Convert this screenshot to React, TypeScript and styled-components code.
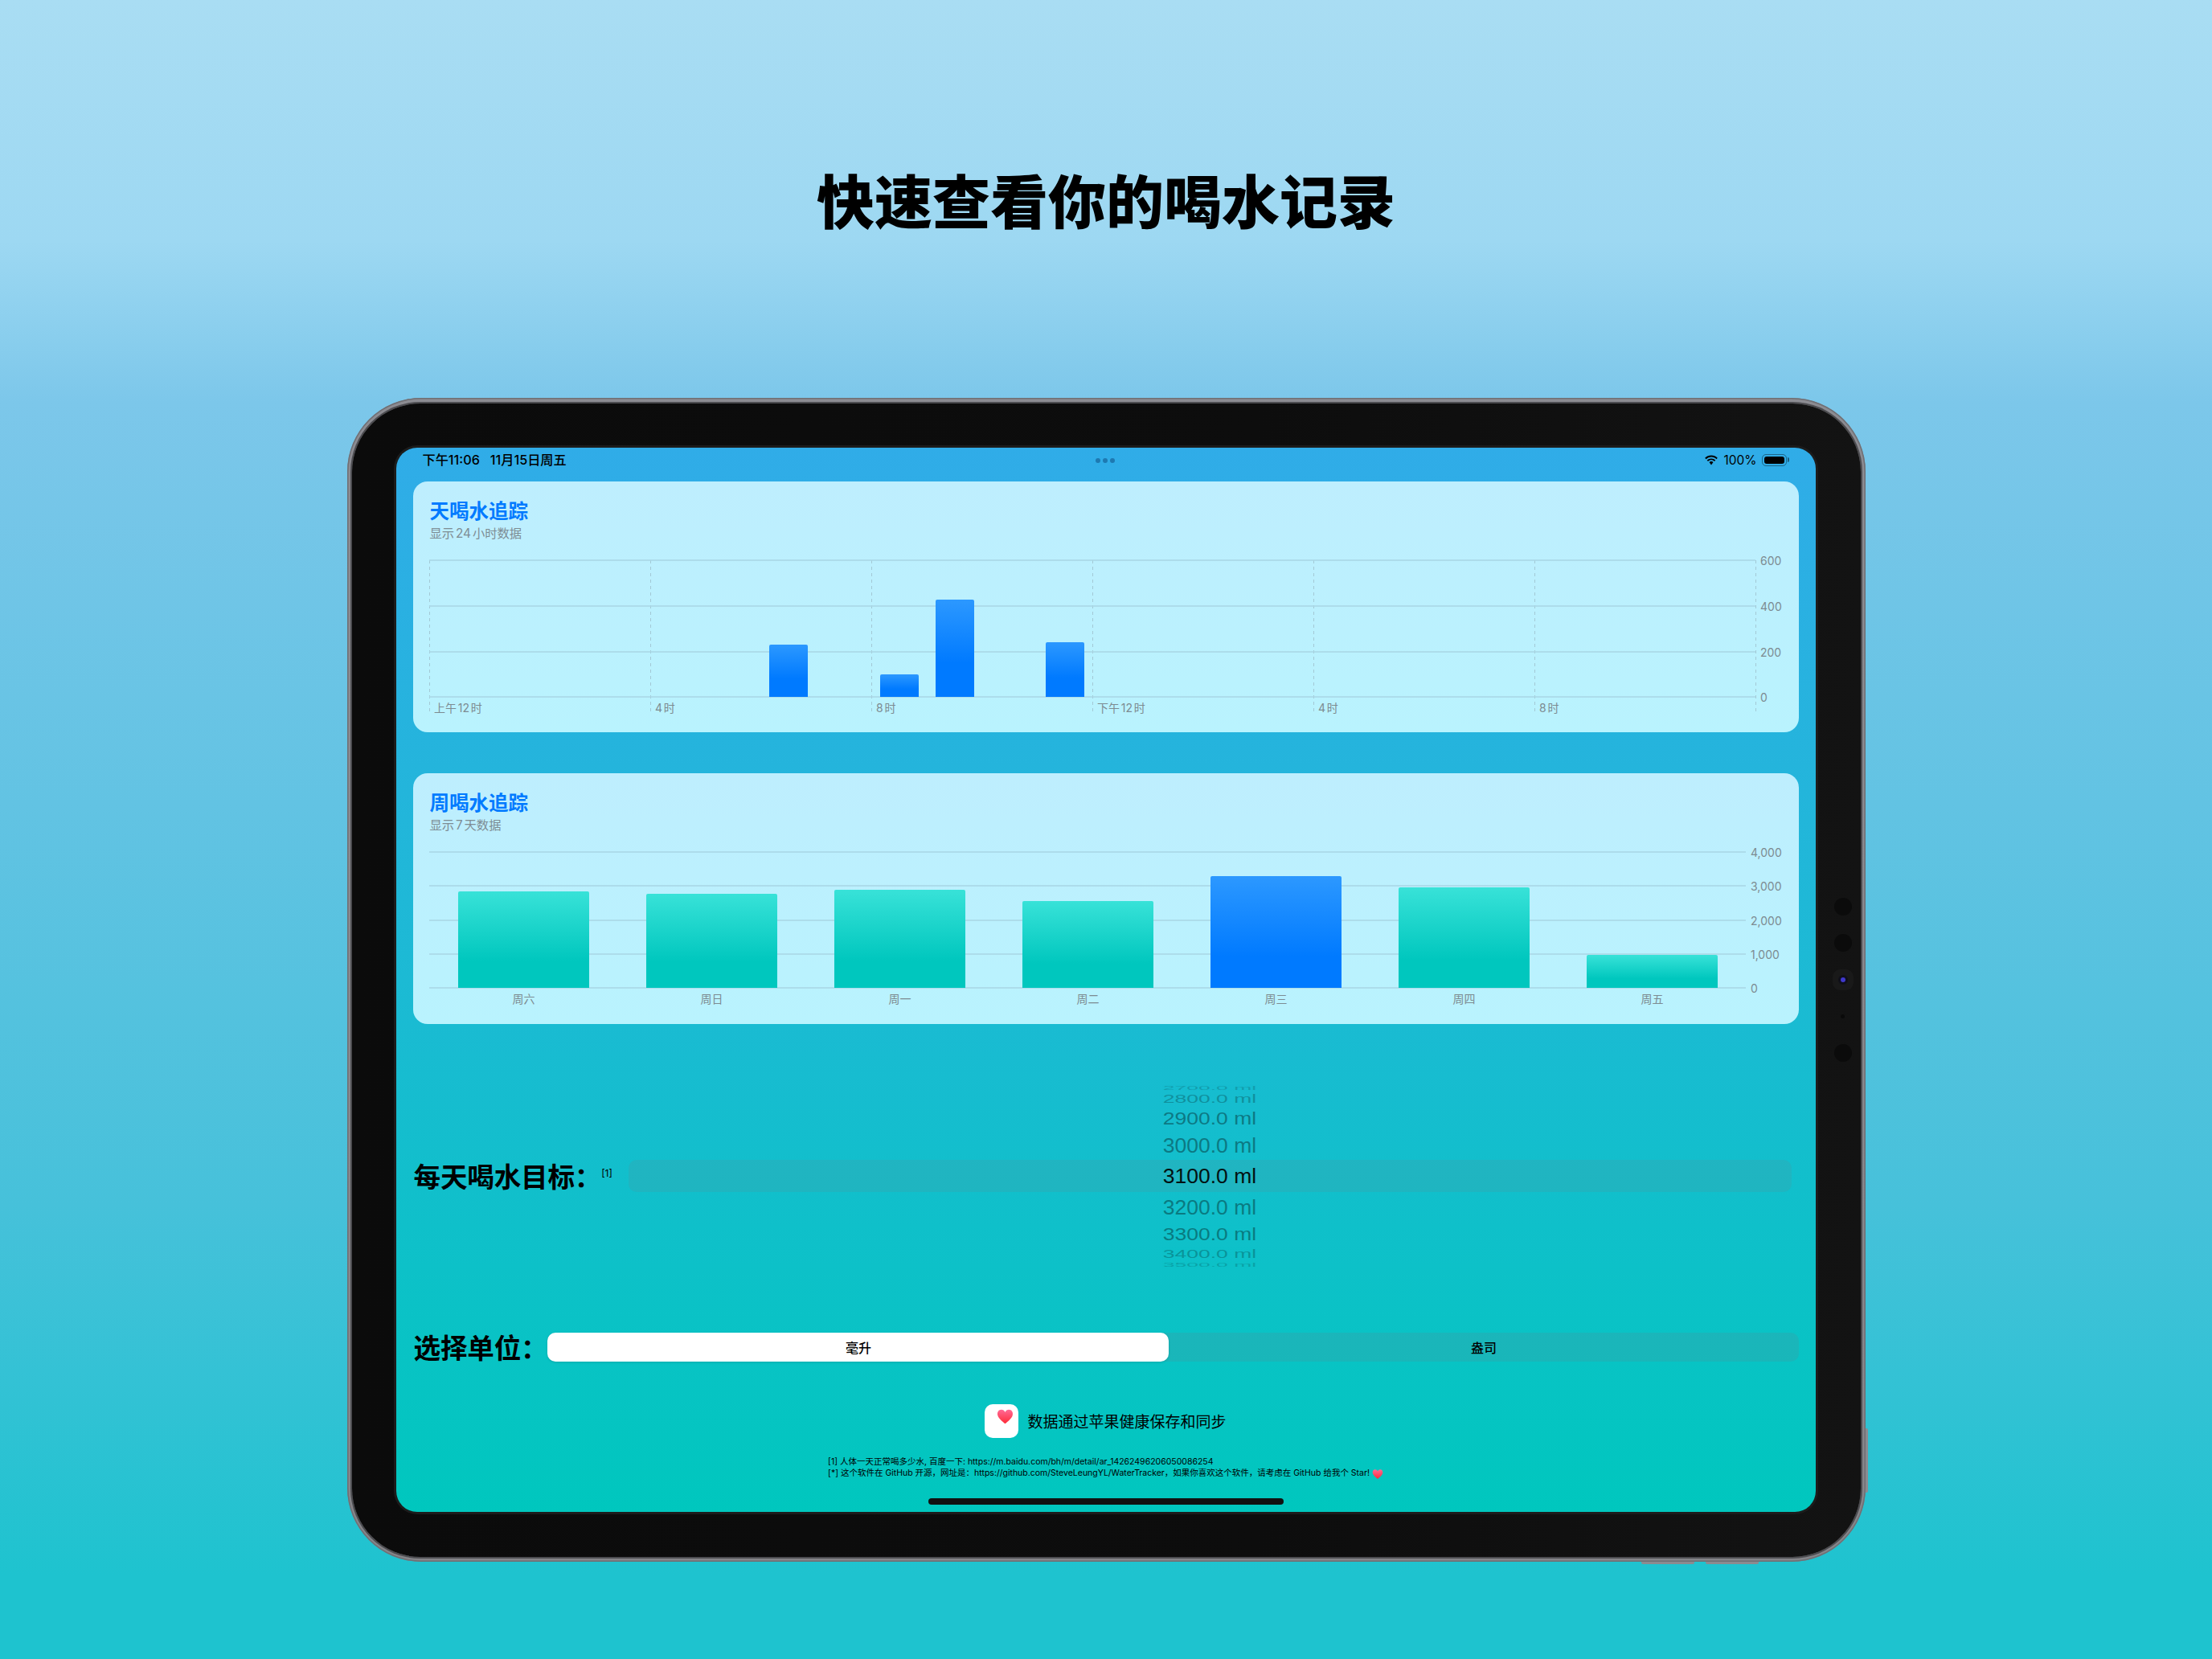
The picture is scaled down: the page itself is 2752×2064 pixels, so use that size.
import styled, { createGlobalStyle } from "styled-components";

const GlobalStyle = createGlobalStyle`
  html, body {
    margin: 0;
    padding: 0;
  }
  body {
    font-family: Inter, "Noto Sans CJK SC", sans-serif;
    text-autospace: normal;
  }
`;

const DAY_X_LABELS = ["上午12时", "4时", "8时", "下午12时", "4时", "8时"];
const DAY_Y_TICKS = [
  { y: 7, label: "600" },
  { y: 64, label: "400" },
  { y: 121, label: "200" },
  { y: 177, label: "0" },
];
const DAY_BARS = [
  { x: 422, top: 112 },
  { x: 560, top: 149 },
  { x: 629, top: 56 },
  { x: 766, top: 109 },
];

const WEEK_Y_TICKS = [
  { y: 7, label: "4,000" },
  { y: 49, label: "3,000" },
  { y: 92, label: "2,000" },
  { y: 134, label: "1,000" },
  { y: 176, label: "0" },
];
const WEEK_BARS = [
  { day: "周六", top: 56 },
  { day: "周日", top: 59 },
  { day: "周一", top: 54 },
  { day: "周二", top: 68 },
  { day: "周三", top: 37, today: true },
  { day: "周四", top: 51 },
  { day: "周五", top: 135 },
];

const PICKER_ROWS = [
  { label: "2700.0 ml", height: 8, squash: 0.3, fade: 0.16 },
  { label: "2800.0 ml", height: 20, squash: 0.56, fade: 0.24 },
  { label: "2900.0 ml", height: 30, squash: 0.8, fade: 0.36 },
  { label: "3000.0 ml", height: 36, squash: 0.96, fade: 0.36 },
  { label: "3100.0 ml", height: 40, squash: 1, fade: 0.9, selected: true },
  { label: "3200.0 ml", height: 38, squash: 0.96, fade: 0.36 },
  { label: "3300.0 ml", height: 30, squash: 0.8, fade: 0.36 },
  { label: "3400.0 ml", height: 18, squash: 0.56, fade: 0.24 },
  { label: "3500.0 ml", height: 8, squash: 0.3, fade: 0.16 },
];

function barPath(x: number, top: number, width: number, bottom: number) {
  return `M${x} ${bottom}V${top + 2}q0-2 2-2H${x + width - 2}q2 0 2 2V${bottom}Z`;
}

function DayChart() {
  return (
    <ChartSvg width="1682" height="200">
      <defs>
        <linearGradient id="dayBlue" x1="0" y1="0" x2="0" y2="1">
          <stop offset="0" stopColor="#2c98ff" />
          <stop offset="0.65" stopColor="#007aff" />
        </linearGradient>
      </defs>
      {[0, 1, 2, 3, 4, 5, 6].map((i) => (
        <line
          key={i}
          x1={i * 275 - 0.5}
          x2={i * 275 - 0.5}
          y1="7"
          y2="197"
          stroke="#a3c9d6"
          strokeDasharray="4 4"
        />
      ))}
      {DAY_Y_TICKS.map((tick) => (
        <g key={tick.label}>
          <line x1="-1" x2="1649" y1={tick.y} y2={tick.y} stroke="#a9d6e5" strokeWidth="1.5" />
          <AxisText x="1655" y={tick.y + 6}>
            {tick.label}
          </AxisText>
        </g>
      ))}
      {DAY_BARS.map((bar) => (
        <path key={bar.x} d={barPath(bar.x, bar.top, 48, 177)} fill="url(#dayBlue)" />
      ))}
      {DAY_X_LABELS.map((label, i) => (
        <AxisText key={i} x={i * 275 + 5} y="196">
          {label}
        </AxisText>
      ))}
    </ChartSvg>
  );
}

function WeekChart() {
  return (
    <ChartSvg width="1682" height="200">
      <defs>
        <linearGradient id="weekTeal" x1="0" y1="0" x2="0" y2="1">
          <stop offset="0" stopColor="#38e2d8" />
          <stop offset="0.72" stopColor="#00c7be" />
        </linearGradient>
        <linearGradient id="weekBlue" x1="0" y1="0" x2="0" y2="1">
          <stop offset="0" stopColor="#2c98ff" />
          <stop offset="0.72" stopColor="#007aff" />
        </linearGradient>
      </defs>
      {WEEK_Y_TICKS.map((tick) => (
        <g key={tick.label}>
          <line x1="-1" x2="1637" y1={tick.y} y2={tick.y} stroke="#a9d6e5" strokeWidth="1.5" />
          <AxisText x="1643" y={tick.y + 6}>
            {tick.label}
          </AxisText>
        </g>
      ))}
      {WEEK_BARS.map((bar, i) => (
        <g key={bar.day}>
          <path
            d={barPath(35 + i * 234, bar.top, 163, 176)}
            fill={bar.today ? "url(#weekBlue)" : "url(#weekTeal)"}
          />
          <AxisText x={116.5 + i * 234} y="195" textAnchor="middle">
            {bar.day}
          </AxisText>
        </g>
      ))}
    </ChartSvg>
  );
}

function Heart({ id, size }: { id: string; size: number }) {
  return (
    <svg width={size} height={size} viewBox="0 0 24 24">
      <defs>
        <linearGradient id={id} x1="0" y1="0" x2="0" y2="1">
          <stop offset="0" stopColor="#ff6a96" />
          <stop offset="1" stopColor="#ff2b38" />
        </linearGradient>
      </defs>
      <path
        d="M12 22S2.500 15.500 1.300 9.800C.4 5.300 3 2 6.600 2 9 2 11 3.400 12 5.600 13 3.400 15 2 17.400 2c3.600 0 6.200 3.300 5.300 7.800C21.500 15.500 12 22 12 22z"
        fill={`url(#${id})`}
      />
    </svg>
  );
}

function WifiIcon() {
  return (
    <svg width="18" height="13" viewBox="0 0 18 13">
      <path
        d="M9 2.600c2.500 0 4.800 1 6.500 2.600l1.300-1.400A11.300 11.300 0 0 0 9 .6 11.300 11.300 0 0 0 1.200 3.800l1.300 1.400A9.400 9.400 0 0 1 9 2.600z"
        fill="#000"
      />
      <path
        d="M9 6.300c1.500 0 2.900.6 4 1.600l1.300-1.400A7.800 7.800 0 0 0 9 4.400a7.800 7.800 0 0 0-5.300 2.100L5 7.900c1.100-1 2.500-1.600 4-1.600z"
        fill="#000"
      />
      <path d="M9 8.100c-1 0-1.800.4-2.500 1L9 12.400l2.500-3.300c-.7-.6-1.500-1-2.500-1z" fill="#000" />
    </svg>
  );
}

export default function App() {
  return (
    <>
      <GlobalStyle />
      <Page>
        <Headline>快速查看你的喝水记录</Headline>
        <DeviceFrame>
          <SideButton />
          <BottomButton $left={1610} />
          <BottomButton $left={1690} />
          <SensorStrip>
            <SensorCell>
              <Sensor />
            </SensorCell>
            <SensorCell>
              <Sensor />
            </SensorCell>
            <SensorCell>
              <Lens />
            </SensorCell>
            <SensorCell>
              <Mic />
            </SensorCell>
            <SensorCell>
              <Sensor />
            </SensorCell>
          </SensorStrip>
          <DeviceBody>
            <Screen>
              <StatusBar>
                <StatusTime>下午11:06&nbsp;&nbsp;&nbsp;11月15日周五</StatusTime>
                <MultitaskDots>
                  <i />
                  <i />
                  <i />
                </MultitaskDots>
                <StatusRight>
                  <WifiIcon />
                  <span>100%</span>
                  <Battery>
                    <BatteryFill />
                  </Battery>
                </StatusRight>
              </StatusBar>

              <Card>
                <CardTitle>天喝水追踪</CardTitle>
                <CardSubtitle>显示24小时数据</CardSubtitle>
                <DayChart />
              </Card>

              <Card $gap>
                <CardTitle>周喝水追踪</CardTitle>
                <CardSubtitle>显示7天数据</CardSubtitle>
                <WeekChart />
              </Card>

              <GoalRow>
                <RowLabel $width={268}>
                  每天喝水目标：<Reference>[1]</Reference>
                </RowLabel>
                <Picker>
                  {PICKER_ROWS.map((row) => (
                    <PickerRow key={row.label} $height={row.height} $selected={row.selected}>
                      <PickerText $squash={row.squash} $fade={row.fade}>
                        {row.label}
                      </PickerText>
                    </PickerRow>
                  ))}
                </Picker>
              </GoalRow>

              <UnitRow>
                <RowLabel $width={168}>选择单位：</RowLabel>
                <SegmentedControl>
                  <Segment $active>毫升</Segment>
                  <Segment>盎司</Segment>
                </SegmentedControl>
              </UnitRow>

              <HealthRow>
                <HealthIcon>
                  <Heart id="healthHeart" size={21} />
                </HealthIcon>
                <HealthText>数据通过苹果健康保存和同步</HealthText>
              </HealthRow>

              <Footnotes>
                <div>[1] 人体一天正常喝多少水, 百度一下: https://m.baidu.com/bh/m/detail/ar_14262496206050086254</div>
                <div>
                  [*] 这个软件在 GitHub 开源，网址是：https://github.com/SteveLeungYL/WaterTracker，如果你喜欢这个软件，请考虑在 GitHub 给我个 Star!{" "}
                  <Heart id="noteHeart" size={14} />
                </div>
              </Footnotes>

              <HomeIndicator />
            </Screen>
          </DeviceBody>
        </DeviceFrame>
      </Page>
    </>
  );
}

const Page = styled.div`
  width: 2752px;
  height: 2064px;
  overflow: hidden;
  display: flex;
  flex-direction: column;
  align-items: center;
  background: linear-gradient(
    180deg,
    #a9ddf3 0,
    #9dd8f2 300px,
    #7cc7ea 500px,
    #62c3e3 1000px,
    #46c1da 1500px,
    #1ec3cf 1960px,
    #1ec3cf 2064px
  );
`;

const Headline = styled.h1`
  margin: 197px 0 0;
  height: 298px;
  font-family: "Noto Sans CJK SC", sans-serif;
  font-size: 72px;
  line-height: 100px;
  font-weight: 900;
  color: #000;
`;

const DeviceFrame = styled.div`
  position: relative;
  box-sizing: border-box;
  width: 1889px;
  height: 1448px;
  padding: 7px 6px 6px;
  border-radius: 92px;
  background: linear-gradient(180deg, #8c8c92, #858589);
  box-shadow: inset 0 0 0 1.5px #6f6f74;
`;

const SideButton = styled.div`
  position: absolute;
  right: -3px;
  top: 1282px;
  width: 3px;
  height: 80px;
  border-radius: 0 2px 2px 0;
  background: #8b8b90;
`;

const BottomButton = styled.div<{ $left: number }>`
  position: absolute;
  bottom: -3px;
  left: ${(p) => p.$left}px;
  width: 66px;
  height: 3px;
  border-radius: 0 0 2px 2px;
  background: #8b8b90;
`;

const SensorStrip = styled.div`
  position: absolute;
  top: 610px;
  right: 6px;
  width: 44px;
  display: flex;
  flex-direction: column;
`;

const SensorCell = styled.div`
  height: 45.5px;
  display: flex;
  align-items: center;
  justify-content: center;
`;

const Sensor = styled.div`
  width: 22px;
  height: 22px;
  border-radius: 50%;
  background: #0b0b0b;
`;

const Lens = styled.div`
  width: 6px;
  height: 6px;
  border-radius: 50%;
  background: #3f38cc;
  box-shadow: 0 0 0 3px #0f0f1a, 0 0 0 10px #191919;
`;

const Mic = styled.div`
  width: 5px;
  height: 5px;
  border-radius: 50%;
  background: #0a0a0a;
`;

const DeviceBody = styled.div`
  box-sizing: border-box;
  height: 100%;
  padding: 55px 56px 56px 55px;
  border-radius: 85px;
  background: linear-gradient(90deg, #0b0b0b, #0d0d0d 60%, #131313);
  box-shadow: 0 0 0 2px #4c4c50;
`;

const Screen = styled.div`
  position: relative;
  z-index: 1;
  box-sizing: border-box;
  height: 1324px;
  padding: 0 21px;
  border-radius: 26px;
  display: flex;
  flex-direction: column;
  background: linear-gradient(180deg, #30ace8, #1cbad4 50%, #00c7be);
  box-shadow: 0 0 0 3px #1c1c1c;
`;

const StatusBar = styled.div`
  box-sizing: border-box;
  height: 42px;
  margin: 0 13px 0 12px;
  padding-top: 7px;
  display: grid;
  grid-template-columns: 1fr auto 1fr;
  font-size: 16.2px;
  line-height: 17px;
  color: #000;
  text-autospace: no-autospace;
`;

const StatusTime = styled.div`
  font-weight: 500;
`;

const MultitaskDots = styled.div`
  display: flex;
  align-items: center;
  gap: 3px;
  height: 17px;
  i {
    width: 6px;
    height: 6px;
    border-radius: 50%;
    background: rgba(0, 40, 90, 0.38);
  }
`;

const StatusRight = styled.div`
  display: flex;
  align-items: center;
  justify-content: flex-end;
  gap: 6px;
  height: 17px;
  font-size: 15.5px;
  font-weight: 400;
`;

const Battery = styled.div`
  position: relative;
  box-sizing: border-box;
  width: 31px;
  height: 15px;
  margin-right: 2px;
  padding: 2px;
  border: 1px solid rgba(0, 0, 0, 0.4);
  border-radius: 5px;
  &::after {
    content: "";
    position: absolute;
    right: -4px;
    top: 3px;
    width: 2px;
    height: 6px;
    border-radius: 0 2px 2px 0;
    background: rgba(0, 0, 0, 0.45);
  }
`;

const BatteryFill = styled.div`
  height: 100%;
  border-radius: 3px;
  background: #000;
`;

const Card = styled.section<{ $gap?: boolean }>`
  box-sizing: border-box;
  height: 312px;
  margin-top: ${(p) => (p.$gap ? 51 : 0)}px;
  padding: 21px 21px 0;
  border-radius: 18px;
  background: linear-gradient(180deg, #beeefe, #b9f3fe);
`;

const CardTitle = styled.h2`
  margin: 0;
  font-family: "Noto Sans CJK SC", sans-serif;
  font-size: 24.5px;
  line-height: 30px;
  font-weight: 700;
  color: #007aff;
`;

const CardSubtitle = styled.div`
  margin: 4px 0 16px;
  font-size: 15.3px;
  line-height: 20px;
  color: #7d8c93;
`;

const ChartSvg = styled.svg`
  display: block;
  overflow: visible;
`;

const AxisText = styled.text`
  font-family: Inter, "Noto Sans CJK SC", sans-serif;
  font-size: 14px;
  fill: #7d8b91;
`;

const GoalRow = styled.div`
  display: flex;
  align-items: center;
  margin: 75px 9px 0 0;
`;

const RowLabel = styled.div<{ $width: number }>`
  flex: 0 0 ${(p) => p.$width - 3}px;
  padding-left: 1px;
  box-sizing: border-box;
  font-family: "Noto Sans CJK SC", sans-serif;
  font-size: 33.6px;
  letter-spacing: -0.2px;
  line-height: 40px;
  font-weight: 600;
  color: #000;
  white-space: nowrap;
`;

const Reference = styled.sup`
  font-family: Inter, sans-serif;
  font-size: 12px;
  font-weight: 400;
  line-height: 0;
  letter-spacing: 0;
  vertical-align: 13px;
`;

const Picker = styled.div`
  flex: 1;
  margin-left: 3px;
  display: flex;
  flex-direction: column;
`;

const PickerRow = styled.div<{ $height: number; $selected?: boolean }>`
  height: ${(p) => p.$height}px;
  display: flex;
  align-items: center;
  justify-content: center;
  overflow: ${(p) => (p.$selected ? "visible" : "hidden")};
  border-radius: 10px;
  background: ${(p) => (p.$selected ? "rgba(118, 118, 128, 0.14)" : "transparent")};
`;

const PickerText = styled.span<{ $squash: number; $fade: number }>`
  font-family: "Liberation Sans", Arial, sans-serif;
  font-size: 26.5px;
  line-height: 30px;
  color: #000;
  opacity: ${(p) => p.$fade};
  transform: scaleY(${(p) => p.$squash});
`;

const UnitRow = styled.div`
  display: flex;
  align-items: center;
  height: 36px;
  margin-top: 81px;
`;

const SegmentedControl = styled.div`
  flex: 1;
  height: 36px;
  display: grid;
  grid-template-columns: 773px 1fr;
  border-radius: 10px;
  background: rgba(118, 118, 128, 0.16);
`;

const Segment = styled.div<{ $active?: boolean }>`
  display: flex;
  align-items: center;
  justify-content: center;
  border-radius: 10px;
  font-family: "Noto Sans CJK SC", sans-serif;
  font-size: 16px;
  font-weight: 500;
  color: #000;
  background: ${(p) => (p.$active ? "#fff" : "transparent")};
  box-shadow: ${(p) => (p.$active ? "0 1px 3px rgba(0, 0, 0, 0.12)" : "none")};
`;

const HealthRow = styled.div`
  display: flex;
  align-items: center;
  justify-content: center;
  gap: 11px;
  margin-top: 53px;
`;

const HealthIcon = styled.div`
  box-sizing: border-box;
  width: 42px;
  height: 42px;
  padding: 5px 0 0 8px;
  display: flex;
  justify-content: center;
  border-radius: 10px;
  background: #fff;
`;

const HealthText = styled.div`
  margin-top: -2px;
  font-family: "Noto Sans CJK SC", sans-serif;
  font-size: 19px;
  color: #000;
`;

const Footnotes = styled.div`
  align-self: center;
  margin-top: 23px;
  font-size: 10.5px;
  line-height: 14px;
  height: 28px;
  color: #000;
  white-space: nowrap;
  svg {
    vertical-align: -2px;
    margin: -3px 0;
  }
`;

const HomeIndicator = styled.div`
  align-self: center;
  width: 442px;
  height: 8px;
  margin-top: 24px;
  border-radius: 4px;
  background: #111;
`;
